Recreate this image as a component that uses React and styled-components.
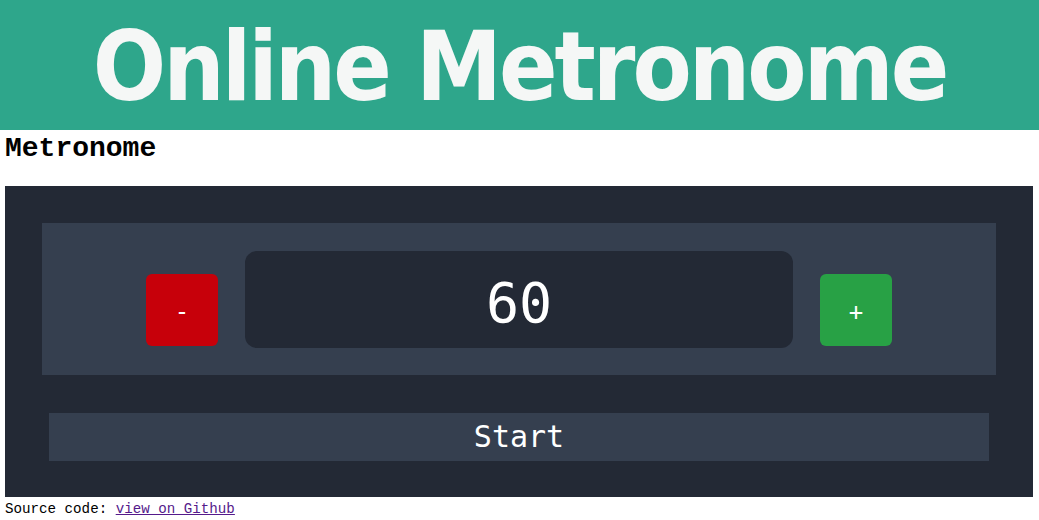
import React from "react";
import styled, { createGlobalStyle } from "styled-components";

const Global = createGlobalStyle`
  html, body { margin: 0; padding: 0; background: #ffffff; }
  body { font-family: "Liberation Mono", monospace; }
`;

const Header = styled.header`
  background: #2ea68b;
  height: 130px;
  display: flex;
  align-items: center;
  justify-content: center;
`;

const Title = styled.h1`
  margin: 0;
  font-family: "DejaVu Sans Condensed", "DejaVu Sans", Verdana, sans-serif;
  font-stretch: condensed;
  font-weight: bold;
  font-size: 96px;
  letter-spacing: -3px;
  color: #f5f7f6;
  line-height: 1;
  padding-top: 4px;
  white-space: nowrap;
`;

const Main = styled.main`
  padding: 0 6px 0 5px;
`;

const Heading = styled.h2`
  margin: 3px 0 21px;
  font-family: "Liberation Mono", monospace;
  font-weight: bold;
  font-size: 28px;
  line-height: 32px;
  color: #000;
`;

const Panel = styled.section`
  background: #232935;
  padding: 37px 37px 36px;
`;

const Controls = styled.div`
  background: #353f4f;
  display: flex;
  justify-content: center;
  align-items: flex-start;
  gap: 27px;
  padding: 28px 0 27px;
`;

const StepButton = styled.button`
  width: 72px;
  height: 72px;
  margin-top: 23px;
  border: none;
  border-radius: 6px;
  background: ${(p) => (p.$variant === "minus" ? "#c7000a" : "#28a145")};
  color: #ffffff;
  font-family: "DejaVu Sans Mono", monospace;
  font-size: 24px;
  line-height: 1;
  padding: 4px 0 0;
  display: flex;
  align-items: center;
  justify-content: center;
  cursor: pointer;
`;

const Display = styled.div`
  width: 548px;
  height: 97px;
  box-sizing: border-box;
  background: #232935;
  border-radius: 12px;
  display: flex;
  align-items: center;
  justify-content: center;
  padding-top: 6px;
  font-family: "DejaVu Sans Mono", monospace;
  font-size: 55px;
  color: #ffffff;
`;

const StartButton = styled.button`
  display: block;
  box-sizing: border-box;
  width: calc(100% - 14px);
  height: 48px;
  margin: 38px 7px 0;
  border: none;
  background: #353f4f;
  color: #ffffff;
  font-family: "DejaVu Sans Mono", monospace;
  font-size: 30px;
  line-height: 48px;
  padding: 0;
  cursor: pointer;
`;

const Footer = styled.p`
  margin: 4px 0 0;
  font-family: "Liberation Mono", monospace;
  font-size: 14.2px;
  line-height: 16px;
  color: #000;
`;

const Link = styled.a`
  color: #551a8b;
  text-decoration: underline;
`;

export default function App() {
  return (
    <>
      <Global />
      <Header>
        <Title>Online Metronome</Title>
      </Header>
      <Main>
        <Heading>Metronome</Heading>
        <Panel>
          <Controls>
            <StepButton $variant="minus">-</StepButton>
            <Display>60</Display>
            <StepButton $variant="plus">+</StepButton>
          </Controls>
          <StartButton>Start</StartButton>
        </Panel>
        <Footer>
          Source code: <Link href="#">view on Github</Link>
        </Footer>
      </Main>
    </>
  );
}
